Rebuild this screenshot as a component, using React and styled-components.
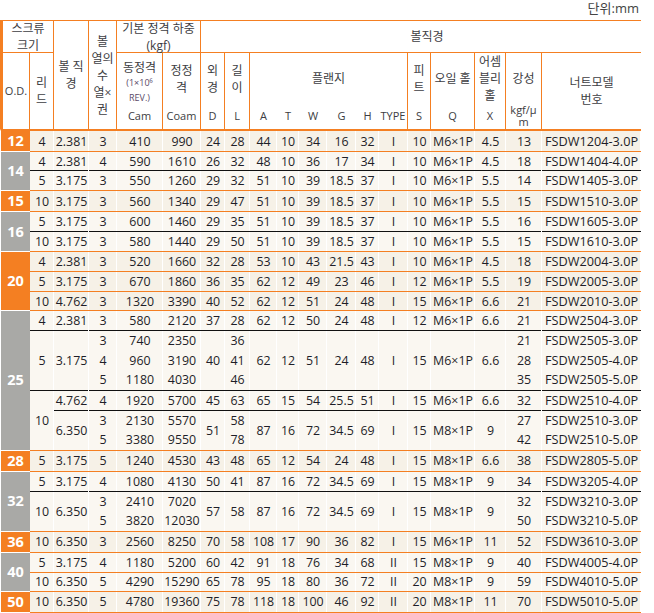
import React from 'react';
import styled, { createGlobalStyle } from 'styled-components';

const ORANGE = '#f47f22';
const GREY = '#a9a9a6';

const GlobalStyle = createGlobalStyle`
  html, body {
    margin: 0;
    background: #fff;
  }
`

const Page = styled.div`
  width: 641px;
  font-family: "Open Sans", "Noto Sans CJK KR", sans-serif;
  color: #1e1e28;
`
const Unit = styled.div`
  height: 20px;
  padding-right: 2px;
  text-align: right;
  font-size: 13px;
  line-height: 16px;
  color: #444;
`
const Table = styled.table`
  width: 641px;
  table-layout: fixed;
  border-collapse: separate;
  border-spacing: 0;
  border-top: 1px solid ${ORANGE};
`
const HeadRow = styled.tr`
  height: ${props => props.$h}px;
`
const Th = styled.th`
  padding: 0;
  font-size: ${props => props.$latin ? 11 : 12}px;
  font-weight: normal;
  line-height: ${props => props.$latin ? 12 : 17}px;
  text-align: center;
  vertical-align: middle;
  color: #3d3d42;
  border-right: ${props => props.$open ? 'none' : `1px solid ${ORANGE}`};
  border-bottom: ${props => props.$under ? `1px solid ${ORANGE}` : 'none'};
  border-left: ${props => props.$edge ? `3px solid ${ORANGE}` : 'none'};
  padding-left: ${props => props.$shift || 0}px;
`
// two lines in the short top row, they run a little past the cell
const TopLabel = styled.span`
  display: block;
  margin: -2px 0;
`
const RateCell = styled(Th)`
  vertical-align: bottom;
`
const Small = styled.span`
  display: block;
  margin: -1px 0;
  font-size: 9px;
  line-height: 15px;
  color: #5a4a68;
`
const CodeCell = styled(Th)`
  padding-bottom: 2px;
`
const StiffnessCell = styled(Th)`
  vertical-align: top;
`
const Body = styled.tbody`
  tr:first-child td {
    border-top: 2px solid ${ORANGE};
  }
`
const Row = styled.tr`
  height: ${props => props.$h}px;
`
const Td = styled.td`
  position: relative;
  padding: 0;
  font-size: ${props => props.$wide ? 12.7 : 12.4}px;
  line-height: 15px;
  text-align: center;
  vertical-align: middle;
  white-space: nowrap;
  background: ${props => props.$tint ? '#f6f1e7' : '#faf7f1'};
  border-bottom: 1px solid ${props => props.$line === 'black' ? '#111' : ORANGE};
  box-shadow: inset -1px 0 0 #fff;

  &::after {
    content: ${props => props.$gap ? "''" : 'none'};
    position: absolute;
    right: 0;
    bottom: -1px;
    width: 1px;
    height: 1px;
    background: #fff;
  }
`
const SizeCell = styled.td`
  padding: 0;
  font-size: 14.5px;
  font-weight: bold;
  line-height: 16px;
  text-align: center;
  color: #fff;
  background: ${props => props.$tint ? ORANGE : GREY};
  border-left: 1px solid #fff;
  border-bottom: 1px solid #fff;
`
const Line = styled.span`
  display: block;
  line-height: 19.4px;
`

const widths = [30, 24, 35, 28, 46, 38, 24, 25, 27, 22, 28, 29, 23, 29, 23, 44, 31, 36, 99];
const M6 = 'M6×1P';
const M8 = 'M8×1P';

const bands = [
  { size: 12, tint: true, inner: 'orange', rows: [
    { h: 23, lead: 4, cells: ['2.381', 3, 410, 990, 24, 28, 44, 10, 34, 16, 32, 'I', 10, M6, '4.5', 13, 'FSDW1204-3.0P'] },
  ] },
  { size: 14, inner: 'black', rows: [
    { h: 19, lead: 4, cells: ['2.381', 4, 590, 1610, 26, 32, 48, 10, 36, 17, 34, 'I', 10, M6, '4.5', 18, 'FSDW1404-4.0P'] },
    { h: 20, lead: 5, cells: ['3.175', 3, 550, 1260, 29, 32, 51, 10, 39, '18.5', 37, 'I', 10, M6, '5.5', 14, 'FSDW1405-3.0P'] },
  ] },
  { size: 15, tint: true, inner: 'orange', rows: [
    { h: 21, lead: 10, cells: ['3.175', 3, 560, 1340, 29, 47, 51, 10, 39, '18.5', 37, 'I', 10, M6, '5.5', 15, 'FSDW1510-3.0P'] },
  ] },
  { size: 16, inner: 'black', rows: [
    { h: 20, lead: 5, cells: ['3.175', 3, 600, 1460, 29, 35, 51, 10, 39, '18.5', 37, 'I', 10, M6, '5.5', 16, 'FSDW1605-3.0P'] },
    { h: 20, lead: 10, cells: ['3.175', 3, 580, 1440, 29, 50, 51, 10, 39, '18.5', 37, 'I', 10, M6, '5.5', 15, 'FSDW1610-3.0P'] },
  ] },
  { size: 20, tint: true, inner: 'orange', rows: [
    { h: 20, lead: 4, cells: ['2.381', 3, 520, 1660, 32, 28, 53, 10, 43, '21.5', 43, 'I', 10, M6, '4.5', 18, 'FSDW2004-3.0P'] },
    { h: 20, lead: 5, cells: ['3.175', 3, 670, 1860, 36, 35, 62, 12, 49, 23, 46, 'I', 12, M6, '5.5', 19, 'FSDW2005-3.0P'] },
    { h: 19, lead: 10, cells: ['4.762', 3, 1320, 3390, 40, 52, 62, 12, 51, 24, 48, 'I', 15, M6, '6.6', 21, 'FSDW2010-3.0P'] },
  ] },
  { size: 25, inner: 'black', rows: [
    { h: 20, lead: 4, cells: ['2.381', 3, 580, 2120, 37, 28, 62, 12, 50, 24, 48, 'I', 12, M6, '6.6', 21, 'FSDW2504-3.0P'] },
    { h: 60, lead: 5, cells: ['3.175', [3, 4, 5], [740, 960, 1180], [2350, 3190, 4030], 40, [36, 41, 46], 62, 12, 51, 24, 48, 'I', 15, M6, '6.6', [21, 28, 35], ['FSDW2505-3.0P', 'FSDW2505-4.0P', 'FSDW2505-5.0P']] },
    { h: 20, lead: 10, leadSpan: 2, cells: ['4.762', 4, 1920, 5700, 45, 63, 65, 15, 54, '25.5', 51, 'I', 15, M6, '6.6', 32, 'FSDW2510-4.0P'] },
    { h: 39, cells: ['6.350', [3, 5], [2130, 3380], [5570, 9550], 51, [58, 78], 87, 16, 72, '34.5', 69, 'I', 15, M8, 9, [27, 42], ['FSDW2510-3.0P', 'FSDW2510-5.0P']] },
  ] },
  { size: 28, tint: true, inner: 'orange', rows: [
    { h: 21, lead: 5, cells: ['3.175', 5, 1240, 4530, 43, 48, 65, 12, 54, 24, 48, 'I', 15, M8, '6.6', 38, 'FSDW2805-5.0P'] },
  ] },
  { size: 32, inner: 'black', rows: [
    { h: 20, lead: 5, cells: ['3.175', 4, 1080, 4130, 50, 41, 87, 16, 72, '34.5', 69, 'I', 15, M8, 9, 34, 'FSDW3205-4.0P'] },
    { h: 40, lead: 10, cells: ['6.350', [3, 5], [2410, 3820], [7020, 12030], 57, 58, 87, 16, 72, '34.5', 69, 'I', 15, M8, 9, [32, 50], ['FSDW3210-3.0P', 'FSDW3210-5.0P']] },
  ] },
  { size: 36, tint: true, inner: 'orange', rows: [
    { h: 21, lead: 10, cells: ['6.350', 3, 2560, 8250, 70, 58, 108, 17, 90, 36, 82, 'I', 15, M6, 11, 52, 'FSDW3610-3.0P'] },
  ] },
  { size: 40, inner: 'orange', rows: [
    { h: 20, lead: 5, cells: ['3.175', 4, 1180, 5200, 60, 42, 91, 18, 76, 34, 68, 'II', 15, M8, 9, 40, 'FSDW4005-4.0P'] },
    { h: 19, lead: 10, cells: ['6.350', 5, 4290, 15290, 65, 78, 95, 18, 80, 36, 72, 'II', 20, M8, 9, 59, 'FSDW4010-5.0P'] },
  ] },
  { size: 50, tint: true, inner: 'orange', rows: [
    { h: 21, lead: 10, cells: ['6.350', 5, 4780, 19360, 75, 78, 118, 18, 100, 46, 92, 'II', 20, M8, 11, 70, 'FSDW5010-5.0P'] },
  ] },
];

// the black rules break at the ball diameter and stiffness columns
const GAP_COLUMNS = [0, 15];

const CellText = ({ value }) => (
  Array.isArray(value)
    ? value.map(v => <Line key={v}>{v}</Line>)
    : value
)

const Band = ({ band }) => {
  const last = band.rows.length - 1;
  return band.rows.map((row, i) => {
    const line = i === last ? 'orange' : band.inner;
    return (
      <Row key={i} $h={row.h}>
        {i === 0 && <SizeCell rowSpan={band.rows.length} $tint={band.tint}>{band.size}</SizeCell>}
        {row.lead !== undefined && (
          <Td rowSpan={row.leadSpan} $tint={band.tint} $line={row.leadSpan ? 'orange' : line}>{row.lead}</Td>
        )}
        {row.cells.map((cell, c) => (
          <Td
            key={c}
            $tint={band.tint}
            $line={line}
            $wide={c === row.cells.length - 1}
            $gap={line === 'black' && GAP_COLUMNS.includes(c)}
          >
            <CellText value={cell} />
          </Td>
        ))}
      </Row>
    )
  })
}

const App = () => {
  return (
    <Page>
      <GlobalStyle />
      <Unit>단위:mm</Unit>
      <Table>
        <colgroup>
          {widths.map((w, i) => <col key={i} style={{ width: w }} />)}
        </colgroup>
        <thead>
          <HeadRow $h={32}>
            <Th colSpan={2} $edge $under><TopLabel>스크류<br />크기</TopLabel></Th>
            <Th rowSpan={3}>볼 직<br />경</Th>
            <Th rowSpan={3}>볼<br />열의<br />수<br />열×<br />권</Th>
            <Th colSpan={2} $under><TopLabel>기본 정격 하중<br />(kgf)</TopLabel></Th>
            <Th colSpan={13} $under $open $shift={12}>볼직경</Th>
          </HeadRow>
          <HeadRow $h={51}>
            <Th rowSpan={2} $edge $latin>O.D.</Th>
            <Th rowSpan={2}>리<br />드</Th>
            <RateCell>
              동정격<Small>(1×10⁶<br />REV.)</Small>
            </RateCell>
            <Th>정정<br />격</Th>
            <Th>외<br />경</Th>
            <Th>길<br />이</Th>
            <Th colSpan={6}>플랜지</Th>
            <Th>피<br />트</Th>
            <Th>오일 홀</Th>
            <Th>어셈<br />블리<br />홀</Th>
            <Th>강성</Th>
            <Th rowSpan={2} $open>너트모델<br />번호</Th>
          </HeadRow>
          <HeadRow $h={25}>
            <CodeCell $latin>Cam</CodeCell>
            <CodeCell $latin>Coam</CodeCell>
            <CodeCell $latin>D</CodeCell>
            <CodeCell $latin>L</CodeCell>
            <CodeCell $latin $open>A</CodeCell>
            <CodeCell $latin $open>T</CodeCell>
            <CodeCell $latin $open>W</CodeCell>
            <CodeCell $latin $open>G</CodeCell>
            <CodeCell $latin $open>H</CodeCell>
            <CodeCell $latin>TYPE</CodeCell>
            <CodeCell $latin>S</CodeCell>
            <CodeCell $latin>Q</CodeCell>
            <CodeCell $latin>X</CodeCell>
            <StiffnessCell $latin>kgf/μ<br />m</StiffnessCell>
          </HeadRow>
        </thead>
        <Body>
          {bands.map(band => <Band key={band.size} band={band} />)}
        </Body>
      </Table>
    </Page>
  )
}

export default App;
